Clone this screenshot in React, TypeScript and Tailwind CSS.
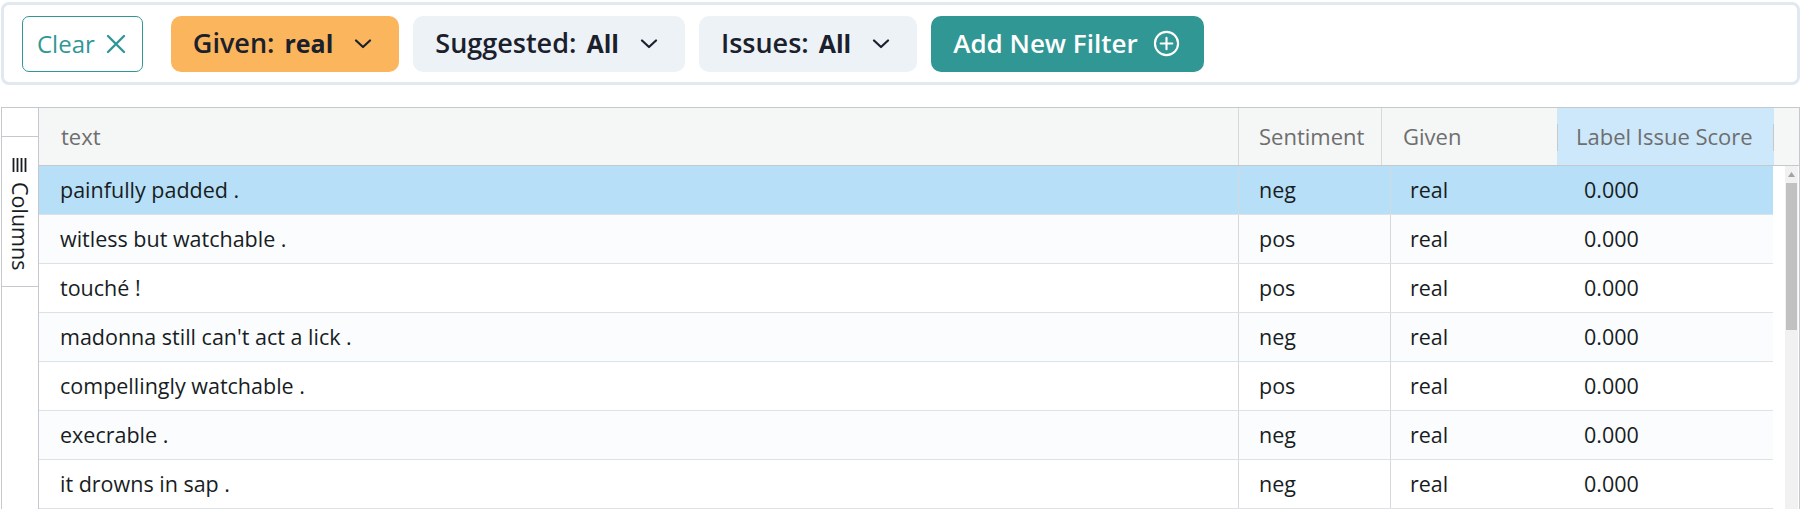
import React from "react";

const rows: [string, string][] = [
  ["painfully padded .", "neg"],
  ["witless but watchable .", "pos"],
  ["touché !", "pos"],
  ["madonna still can't act a lick .", "neg"],
  ["compellingly watchable .", "pos"],
  ["execrable .", "neg"],
  ["it drowns in sap .", "neg"],
];

function Chevron() {
  return (
    <svg width="18" height="10" viewBox="0 0 18 10" fill="none">
      <path d="M2 1.5 L9 8 L16 1.5" stroke="#1a202c" strokeWidth="2.2" strokeLinecap="round" strokeLinejoin="round" />
    </svg>
  );
}

function FilterButton({ label, value, bg }: { label: string; value: string; bg: string }) {
  return (
    <div className={`h-[56px] rounded-[10px] flex items-center pl-[22px] pr-[27px] text-[#1a202c] ${bg}`}>
      <span className="font-semibold text-[27px]">{label}</span>
      <span className="font-bold ml-[10px] text-[25px]">{value}</span>
      <span className="ml-[21px] flex items-center">
        <Chevron />
      </span>
    </div>
  );
}

export default function App() {
  return (
    <div className="w-[1802px] h-[509px] overflow-hidden bg-white pt-[2px] pl-[1px] pr-[2px] font-['Open_Sans',sans-serif]">
      <div className="h-[83px] border-[3px] border-[#e2e8f0] rounded-[8px] flex items-center pl-[18px]">
        <div className="h-[56px] rounded-[7px] border border-[#319795] flex items-center pl-[14px] pr-[16px] text-[#319795] text-[24px]">
          <span>Clear</span>
          <svg className="ml-[11px]" width="20" height="20" viewBox="0 0 20 20" fill="none">
            <path d="M2 2 L18 18 M18 2 L2 18" stroke="#319795" strokeWidth="2.4" strokeLinecap="round" />
          </svg>
        </div>
        <div className="ml-[28px]">
          <FilterButton label="Given:" value="real" bg="bg-[#fbb55c]" />
        </div>
        <div className="ml-[14px]">
          <FilterButton label="Suggested:" value="All" bg="bg-[#edf2f7]" />
        </div>
        <div className="ml-[14px]">
          <FilterButton label="Issues:" value="All" bg="bg-[#edf2f7]" />
        </div>
        <div className="ml-[14px] h-[56px] rounded-[10px] bg-[#319795] flex items-center pl-[22px] pr-[24px] text-white text-[26px] font-semibold">
          <span>Add New Filter</span>
          <svg className="ml-[15px]" width="27" height="27" viewBox="0 0 28 28" fill="none">
            <circle cx="14" cy="14" r="12" stroke="white" strokeWidth="2.2" />
            <path d="M14 8 V20 M8 14 H20" stroke="white" strokeWidth="2.2" strokeLinecap="round" />
          </svg>
        </div>
      </div>

      <div className="mt-[22px] h-[420px] border border-[#c5c8cc] flex text-[21.5px]">
        {/* side panel */}
        <div className="w-[37px] shrink-0 border-r border-[#c5c8cc] flex flex-col">
          <div className="h-[29px] border-b border-[#c5c8cc]" />
          <div className="h-[150px] border-b border-[#c5c8cc] flex flex-col items-center pt-[20px] text-[#181d1f]">
            <svg width="16" height="16" viewBox="0 0 16 16" fill="none">
              <path d="M1.5 1 V15 M5.5 1 V15 M9.5 1 V15 M13.5 1 V15" stroke="#181d1f" strokeWidth="1.8" />
            </svg>
            <span className="mt-[9px] [writing-mode:vertical-rl] leading-none text-[21.5px]">Columns</span>
          </div>
        </div>

        {/* grid */}
        <div className="flex-1 flex flex-col min-w-0">
          <div className="h-[58px] shrink-0 border-b border-[#c5c8cc] bg-[#f5f6f6] flex text-[#6e6e6e] text-[22px]">
            <div className="w-[1199px] flex items-center pl-[22px]">text</div>
            <div className="w-[143px] flex items-center pl-[20px] border-l border-[#d6d9dc]">Sentiment</div>
            <div className="w-[176px] flex items-center pl-[21px] border-l border-[#d6d9dc]">Given</div>
            <div className="w-[217px] flex items-center pl-[19px] bg-[#cde8fb] relative">
              <span className="absolute left-0 top-[16px] h-[27px] w-px bg-[#c5c8cc]" />
              Label Issue Score
              <span className="absolute right-0 top-[16px] h-[27px] w-px bg-[#c5c8cc]" />
            </div>
            <div className="flex-1" />
          </div>
          <div className="flex flex-1 min-h-0">
            <div className="w-[1734px] shrink-0 flex flex-col text-[#181d1f]">
              {rows.map(([t, s], i) => (
                <div
                  key={i}
                  className={`h-[49px] shrink-0 flex border-b border-[#dde2e6] ${
                    i === 0 ? "bg-[#b7dff7]" : i % 2 === 1 ? "bg-[#fafcfe]" : "bg-white"
                  }`}
                >
                  <div className="w-[1199px] flex items-center pl-[21px]">{t}</div>
                  <div className="w-[152px] flex items-center pl-[20px] border-l border-[#d6d9dc]">{s}</div>
                  <div className="w-[173px] flex items-center pl-[19px] border-l border-[#d6d9dc]">real</div>
                  <div className="flex-1 flex items-center pl-[21px]">0.000</div>
                </div>
              ))}
            </div>
            <div className="flex-1 relative">
              <div className="absolute left-[12px] top-0 bottom-0 w-[13px] bg-[#f1f1f1]">
                <svg className="absolute left-[3px] top-[6px]" width="7" height="5" viewBox="0 0 7 5">
                  <path d="M0 5 L3.5 0 L7 5 Z" fill="#a3a3a3" />
                </svg>
                <div className="absolute left-[1px] right-[1px] top-[17px] h-[147px] bg-[#c1c1c1]" />
              </div>
            </div>
          </div>
        </div>
      </div>
    </div>
  );
}
